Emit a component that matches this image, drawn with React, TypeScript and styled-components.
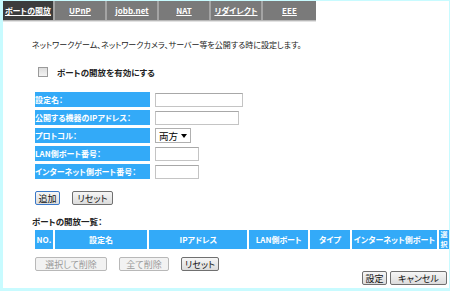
import React from "react";
import { styled, createGlobalStyle } from "styled-components";

const GlobalStyle = createGlobalStyle`
  html, body {
    margin: 0;
    padding: 0;
    background: #ffffff;
  }
  body {
    font-family: "Noto Sans CJK JP", "DejaVu Sans", sans-serif;
    font-size: 9px;
    font-feature-settings: "palt";
    color: #222;
  }
`;

const Frame = styled.div`
  box-sizing: border-box;
  width: 450px;
  height: 291px;
  border-left: 3px solid #c8fbff;
  border-right: 1px solid #c8fbff;
  border-top: 1px solid #c8fbff;
  border-bottom: 3px solid #c8fbff;
  display: flex;
  flex-direction: column;
  overflow: hidden;
`;

const TabBar = styled.div`
  display: flex;
  width: 313px;
  height: 20px;
  margin-top: -1px;
  background: #7a7a7a;
  box-shadow: 0 1px 0 #b8b8b8, 0 2px 0 #e2e2e2;
`;

const Tab = styled.div<{ $active?: boolean }>`
  box-sizing: border-box;
  width: 52px;
  display: flex;
  align-items: center;
  justify-content: center;
  background: ${(p) => (p.$active ? "#3c3c3c" : "#7a7a7a")};
  border-right: 2px solid #a4a4a4;
  color: #ffffff;
  font-weight: bold;
  font-size: 8px;
  text-decoration: underline;
  white-space: nowrap;

  &:last-child {
    border-right: none;
    flex: 1;
  }
`;

const Content = styled.div`
  padding-left: 29px;
  display: flex;
  flex-direction: column;
`;

const Description = styled.div`
  margin-top: 19px;
  height: 12px;
  line-height: 12px;
  font-size: 8px;
  color: #222;
`;

const CheckRow = styled.label`
  margin-top: 15px;
  margin-left: 6px;
  display: flex;
  align-items: center;
  gap: 9px;
  height: 12px;
  font-weight: bold;
  font-size: 8.5px;
`;

const CheckBox = styled.span`
  box-sizing: border-box;
  width: 10px;
  height: 10px;
  border: 1px solid #9a9a9a;
  background: linear-gradient(#dcdcdc, #f4f4f4);
`;

const FormGrid = styled.div`
  margin-top: 14px;
  margin-left: 3px;
  display: grid;
  grid-template-columns: 115px auto;
  column-gap: 5px;
  row-gap: 3px;
  align-items: center;
`;

const LabelCell = styled.div`
  height: 15px;
  background: #33aaf8;
  color: #ffffff;
  font-weight: bold;
  font-size: 8px;
  line-height: 15px;
  white-space: nowrap;
  overflow: hidden;
`;

const TextBox = styled.div<{ $w: number }>`
  box-sizing: border-box;
  width: ${(p) => p.$w}px;
  height: 14px;
  border: 1px solid #c4c4c4;
  border-top-color: #a8a8a8;
  background: #fff;
`;

const SelectBox = styled.div`
  box-sizing: border-box;
  width: 36px;
  height: 15px;
  border: 1px solid #b0b0b0;
  background: #fff;
  display: flex;
  align-items: center;
  justify-content: space-between;
  padding: 0 3px 0 3px;
  font-size: 9.5px;
  color: #000;
`;

const Arrow = styled.span`
  width: 0;
  height: 0;
  border-left: 3px solid transparent;
  border-right: 3px solid transparent;
  border-top: 4px solid #000;
`;

const ButtonRow = styled.div<{ $mt: number; $gap: number }>`
  margin-top: ${(p) => p.$mt}px;
  margin-left: 3px;
  display: flex;
  gap: ${(p) => p.$gap}px;
`;

const Button = styled.div<{ $w: number; $disabled?: boolean; $focus?: boolean }>`
  box-sizing: border-box;
  width: ${(p) => p.$w}px;
  height: 14px;
  display: flex;
  align-items: center;
  justify-content: center;
  border: 1px solid ${(p) => (p.$focus ? "#3a78c8" : p.$disabled ? "#b8b8b8" : "#707070")};
  border-radius: 2px;
  background: ${(p) =>
    p.$disabled ? "#f2f2f2" : "linear-gradient(#f6f6f6, #dcdcdc)"};
  color: ${(p) => (p.$disabled ? "#9a9a9a" : "#111")};
  font-size: 9px;
  white-space: nowrap;
`;

const ListTitle = styled.div`
  margin-top: 10px;
  height: 12px;
  line-height: 12px;
  font-weight: bold;
  font-size: 8.5px;
`;

const TableHead = styled.div`
  margin-top: 3px;
  margin-left: 3px;
  display: flex;
  gap: 2px;
  height: 19px;
`;

const HeadCell = styled.div<{ $w: number }>`
  width: ${(p) => p.$w}px;
  background: #33aaf8;
  color: #ffffff;
  font-weight: bold;
  font-size: 8px;
  display: flex;
  align-items: center;
  justify-content: center;
  white-space: nowrap;
  overflow: hidden;
`;

const VerticalCell = styled(HeadCell)`
  flex-direction: column;
  line-height: 9.5px;
  font-size: 7px;
`;

const Footer = styled.div`
  display: flex;
  justify-content: flex-end;
  gap: 3px;
  margin-top: 0px;
  padding-right: 2px;
`;

const fields = [
  { label: "設定名：", w: 88 },
  { label: "公開する機器のIPアドレス：", w: 84 },
  { label: "プロトコル：", w: 0 },
  { label: "LAN側ポート番号：", w: 44 },
  { label: "インターネット側ポート番号：", w: 44 },
];

const tabs = ["ポートの開放", "UPnP", "jobb.net", "NAT", "リダイレクト", "EEE"];

const columns = [
  { title: "NO.", w: 18 },
  { title: "設定名", w: 93 },
  { title: "IPアドレス", w: 99 },
  { title: "LAN側ポート", w: 59 },
  { title: "タイプ", w: 40 },
  { title: "インターネット側ポート", w: 86 },
];

export default function App() {
  return (
    <>
      <GlobalStyle />
      <Frame>
        <TabBar>
          {tabs.map((t, i) => (
            <Tab key={t} $active={i === 0}>
              {t}
            </Tab>
          ))}
        </TabBar>

        <Content>
          <Description>
            ネットワークゲーム、ネットワークカメラ、サーバー等を公開する時に設定します。
          </Description>

          <CheckRow>
            <CheckBox />
            ポートの開放を有効にする
          </CheckRow>

          <FormGrid>
            {fields.map((f) => (
              <React.Fragment key={f.label}>
                <LabelCell>{f.label}</LabelCell>
                {f.w ? (
                  <TextBox $w={f.w} />
                ) : (
                  <SelectBox>
                    両方
                    <Arrow />
                  </SelectBox>
                )}
              </React.Fragment>
            ))}
          </FormGrid>

          <ButtonRow $mt={12} $gap={12}>
            <Button $w={25} $focus>
              追加
            </Button>
            <Button $w={41}>リセット</Button>
          </ButtonRow>

          <ListTitle>ポートの開放一覧：</ListTitle>

          <TableHead>
            {columns.map((c) => (
              <HeadCell key={c.title} $w={c.w}>
                {c.title}
              </HeadCell>
            ))}
            <VerticalCell $w={10}>
              <span>選</span>
              <span>択</span>
            </VerticalCell>
          </TableHead>

          <ButtonRow $mt={8} $gap={12}>
            <Button $w={72} $disabled>
              選択して削除
            </Button>
            <Button $w={50} $disabled>
              全て削除
            </Button>
            <Button $w={38}>リセット</Button>
          </ButtonRow>
        </Content>

        <Footer>
          <Button $w={25}>設定</Button>
          <Button $w={57}>キャンセル</Button>
        </Footer>
      </Frame>
    </>
  );
}
